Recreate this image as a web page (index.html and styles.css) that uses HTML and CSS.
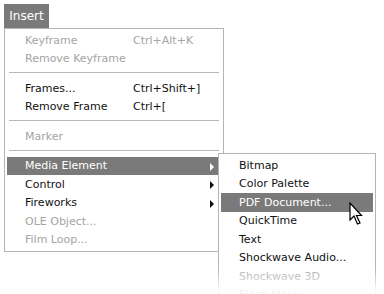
FILE: index.html
```html
<!DOCTYPE html>
<html lang="en">
<head>
  <meta charset="UTF-8" />
  <title>Insert menu</title>
  <link rel="stylesheet" href="styles.css">
</head>
<body>
  <div class="stage">
    <div class="menubar-item">Insert</div>
    <div class="menu">
      <div class="row off"><span class="label">Keyframe</span><span class="key">Ctrl+Alt+K</span></div>
      <div class="row off"><span class="label">Remove Keyframe</span></div>
      <div class="sep"><div></div></div>
      <div class="row"><span class="label">Frames...</span><span class="key">Ctrl+Shift+]</span></div>
      <div class="row"><span class="label">Remove Frame</span><span class="key">Ctrl+[</span></div>
      <div class="sep"><div></div></div>
      <div class="row off"><span class="label">Marker</span></div>
      <div class="sep"><div></div></div>
      <div class="row sel"><span class="label">Media Element</span><span class="arrow"></span></div>
      <div class="row"><span class="label">Control</span><span class="arrow"></span></div>
      <div class="row"><span class="label">Fireworks</span><span class="arrow"></span></div>
      <div class="row off"><span class="label">OLE Object...</span></div>
      <div class="row off"><span class="label">Film Loop...</span></div>
    </div>

    <div class="menu sub">
      <div class="row"><span class="label">Bitmap</span></div>
      <div class="row"><span class="label">Color Palette</span></div>
      <div class="row sel"><span class="label">PDF Document...</span></div>
      <div class="row"><span class="label">QuickTime</span></div>
      <div class="row"><span class="label">Text</span></div>
      <div class="row"><span class="label">Shockwave Audio...</span></div>
      <div class="row off"><span class="label">Shockwave 3D</span></div>
      <div class="row off"><span class="label">Flash Movie</span></div>
    </div>

    <div class="fade"></div>

    <svg class="cursor" width="14" height="24" viewBox="0 0 14 24">
      <path d="M1 1 L1 18 L5 14 L8.5 22 L11 21 L7.5 13.5 L12.5 13.5 Z" fill="#fff" stroke="#000" stroke-width="1.2" stroke-linejoin="miter"/>
    </svg>
  </div>
</body>
</html>
```

FILE: styles.css
```css
* { box-sizing: border-box; }
body {
  margin: 0;
  background: #fff;
  font-family: "DejaVu Sans", sans-serif;
  font-size: 11px;
  color: #111;
}
.stage {
  position: relative;
  width: 384px;
  height: 294px;
  overflow: hidden;
  padding: 4px 0 0 4px;
}
.menubar-item {
  width: 45px;
  height: 24px;
  line-height: 24px;
  text-align: center;
  background: #7a7a7a;
  color: #fff;
  font-size: 12px;
}
.menu {
  width: 220px;
  border: 1px solid #b4b4b4;
  background: #fff;
  padding: 2px;
}
.row {
  height: 18.5px;
  display: flex;
  align-items: center;
  padding-left: 18px;
  position: relative;
}
.row.off { color: #a4a4a4; }
.row.sel { background: #7a7a7a; color: #fff; }
.label { width: 108px; white-space: nowrap; }
.key { white-space: nowrap; }
.arrow {
  position: absolute;
  left: 203px;
  top: 6px;
  width: 0;
  height: 0;
  border-top: 4px solid transparent;
  border-bottom: 4px solid transparent;
  border-left: 4px solid #111;
}
.row.sel .arrow { border-left-color: #fff; }
.sep {
  height: 11px;
  padding: 4px 2px 0;
}
.sep div {
  height: 1px;
  background: #b8b8b8;
}
.sub {
  position: absolute;
  left: 218px;
  top: 153px;
  width: 158px;
  height: 160px;
}
.fade {
  position: absolute;
  left: 200px;
  right: 0;
  top: 268px;
  bottom: 0;
  background: linear-gradient(rgba(255,255,255,0), rgba(255,255,255,0.85) 80%);
}
.cursor {
  position: absolute;
  left: 349px;
  top: 202px;
}
```
